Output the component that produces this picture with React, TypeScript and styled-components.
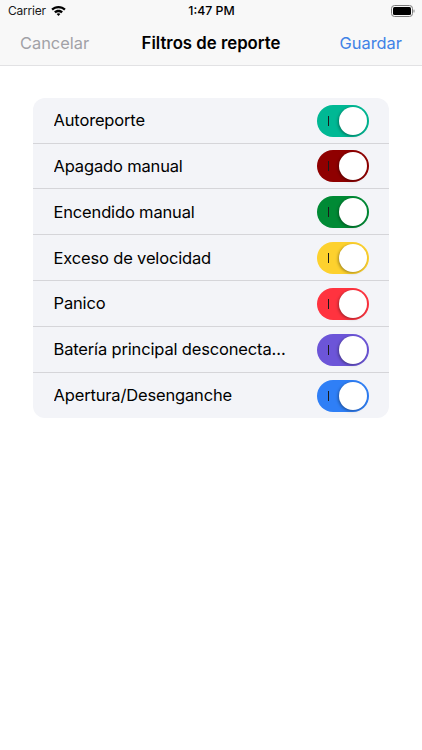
import styled, { createGlobalStyle } from 'styled-components';

const reports = [
  { label: 'Autoreporte', color: '#00b894' },
  { label: 'Apagado manual', color: '#8f0000' },
  { label: 'Encendido manual', color: '#008a35' },
  { label: 'Exceso de velocidad', color: '#fdd12e' },
  { label: 'Panico', color: '#ff333f' },
  { label: 'Batería principal desconectada', color: '#6c55d8' },
  { label: 'Apertura/Desenganche', color: '#2f7ff6' },
];

const GlobalStyle = createGlobalStyle`
  html, body {
    margin: 0;
    padding: 0;
    background: #fff;
    font-family: Inter, "Liberation Sans", sans-serif;
    color: #000;
  }
`;

const Screen = styled.div`
  width: 422px;
  height: 750px;
  overflow: hidden;
  background: #fff;
`;

const Header = styled.header`
  height: 65px;
  background: #f8f8f8;
  border-bottom: 1px solid #e2e2e4;
`;

const StatusBar = styled.div`
  display: grid;
  grid-template-columns: 1fr auto 1fr;
  align-items: center;
  height: 21px;
  padding: 0 7px 0 8px;
  font-size: 12px;
`;

const Carrier = styled.div`
  display: flex;
  align-items: center;
  gap: 5px;
  letter-spacing: -0.2px;
  color: #1a1a1a;
`;

const Clock = styled.div`
  font-size: 12.3px;
  font-weight: 500;
`;

const BatteryWrap = styled.div`
  justify-self: end;
  display: flex;
`;

const NavBar = styled.nav`
  display: grid;
  grid-template-columns: 1fr auto 1fr;
  align-items: center;
  height: 44px;
  padding: 0 20px;
`;

const NavAction = styled.span<{ $color: string; $right?: boolean }>`
  font-size: 16.4px;
  color: ${(p) => p.$color};
  text-align: ${(p) => (p.$right ? 'right' : 'left')};
`;

const Title = styled.h1`
  margin: 0;
  font-size: 16.8px;
  font-weight: 600;
`;

const Card = styled.ul`
  list-style: none;
  margin: 32px 33px 0;
  padding: 0;
  background: #f3f4f8;
  border-radius: 12px;
  overflow: hidden;
`;

const Row = styled.li`
  display: flex;
  align-items: center;
  justify-content: space-between;
  box-sizing: border-box;
  height: 45.8px;
  padding: 0 20px 0 20.5px;
  border-bottom: 1px solid #d5d5d9;

  &:first-child {
    height: 45.6px;
  }

  &:last-child {
    height: 45px;
    border-bottom: none;
  }
`;

const Label = styled.span`
  width: 234px;
  font-size: 16.5px;
  letter-spacing: -0.16px;
  white-space: nowrap;
  overflow: hidden;
  text-overflow: ellipsis;
`;

const Toggle = styled.div<{ $color: string }>`
  position: relative;
  width: 52px;
  height: 32px;
  margin-top: 1px;
  border-radius: 16px;
  background: ${(p) => p.$color};
`;

const OnMark = styled.span`
  position: absolute;
  left: 11px;
  top: 11px;
  width: 1px;
  height: 10px;
  background: #1b1b1b;
`;

const Knob = styled.span`
  position: absolute;
  right: 2px;
  top: 2px;
  width: 28px;
  height: 28px;
  border-radius: 50%;
  background: #fff;
  box-shadow: -1px 1px 3px rgba(0, 0, 0, 0.35);
`;

const WifiIcon = () => (
  <svg width="15" height="12" viewBox="0 0 16 12" aria-hidden="true">
    <path d="M8 .6C5 .6 2.3 1.8.3 3.7l1.7 1.8C3.6 4 5.7 3.1 8 3.1s4.4.9 6 2.4l1.7-1.8C13.7 1.8 11 .6 8 .6z" fill="#000" />
    <path d="M8 4.7c-1.8 0-3.5.7-4.7 1.9l1.7 1.8c.8-.8 1.9-1.2 3-1.2s2.2.4 3 1.2l1.7-1.8C11.5 5.4 9.8 4.7 8 4.7z" fill="#000" />
    <path d="M8 8.5c-.8 0-1.5.3-2 .8l2 2.1 2-2.1c-.5-.5-1.2-.8-2-.8z" fill="#000" />
  </svg>
);

const BatteryIcon = () => (
  <svg width="24" height="12" viewBox="0 0 24 12" aria-hidden="true">
    <rect x="0.5" y="0.5" width="21" height="11" rx="3" fill="none" stroke="#7c7c7c" />
    <rect x="2" y="2" width="18" height="8" rx="1.5" fill="#000" />
    <rect x="22.5" y="4.5" width="1" height="3" rx="0.5" fill="#888" />
  </svg>
);

export default function App() {
  return (
    <Screen>
      <GlobalStyle />
      <Header>
        <StatusBar>
          <Carrier>
            Carrier
            <WifiIcon />
          </Carrier>
          <Clock>1:47 PM</Clock>
          <BatteryWrap>
            <BatteryIcon />
          </BatteryWrap>
        </StatusBar>
        <NavBar>
          <NavAction $color="#a1a1a6">Cancelar</NavAction>
          <Title>Filtros de reporte</Title>
          <NavAction $color="#3f82e6" $right>
            Guardar
          </NavAction>
        </NavBar>
      </Header>
      <Card>
        {reports.map((r) => (
          <Row key={r.label}>
            <Label>{r.label}</Label>
            <Toggle $color={r.color}>
              <OnMark />
              <Knob />
            </Toggle>
          </Row>
        ))}
      </Card>
    </Screen>
  );
}
